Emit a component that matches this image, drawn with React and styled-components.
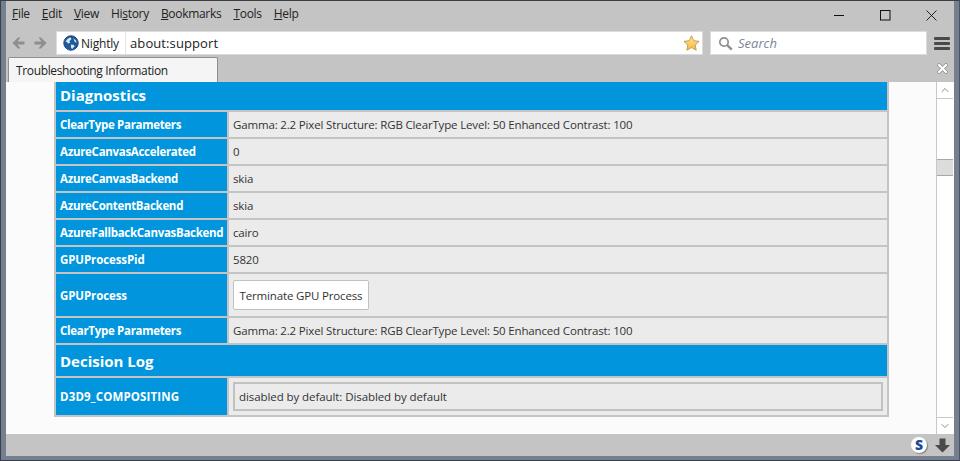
import React from 'react'
import styled, { createGlobalStyle } from 'styled-components'
import { ChevronUp, ChevronDown } from 'lucide-react'

const Global = createGlobalStyle`
    html, body {
        margin: 0;
        padding: 0;
        background: #fff;
    }
    * {
        box-sizing: border-box;
    }
`

const Frame = styled.div`
    width: 960px;
    height: 461px;
    background: #74808f;
    border-top: 1px solid #3a3f45;
    border-left: 1px solid #3a3f45;
    border-right: 1px solid #4b5460;
    border-bottom: 1px solid #3a3f45;
    padding: 0 5px 4px 5px;
    font-family: "Open Sans", "Noto Sans", sans-serif;
    overflow: hidden;
`

const Window = styled.div`
    height: 100%;
    background: #c4c4c4;
    display: flex;
    flex-direction: column;
    position: relative;
`

const MenuBar = styled.div`
    height: 28px;
    display: flex;
    align-items: center;
    justify-content: space-between;
    flex: none;
    padding-left: 6px;
`

const Menus = styled.div`
    display: flex;
    gap: 12px;
    padding-bottom: 4px;
    font-size: 12px;
    letter-spacing: -0.3px;
    color: #222;
`

const WindowButtons = styled.div`
    display: flex;
    align-items: center;
    gap: 35px;
    padding-right: 17px;
    svg {
        display: block;
    }
`

const NavBar = styled.div`
    height: 28px;
    display: flex;
    align-items: center;
    flex: none;
    padding: 0 3px 0 6px;
`

const NavArrows = styled.div`
    display: flex;
    gap: 9px;
    width: 44px;
    svg {
        display: block;
    }
`

const UrlBar = styled.div`
    width: 647px;
    height: 24px;
    flex: none;
    background: #fff;
    border: 1px solid #dcdcdc;
    display: flex;
    align-items: center;
`

const Identity = styled.div`
    width: 69px;
    height: 100%;
    flex: none;
    display: flex;
    align-items: center;
    gap: 2px;
    padding-left: 6px;
    border-right: 1px solid #e3e3e3;
    font-size: 12px;
    letter-spacing: -0.2px;
    color: #222;
`

const Address = styled.div`
    flex: 1;
    padding-left: 4px;
    font-size: 13px;
    letter-spacing: 0.1px;
    color: #222;
`

const StarIcon = styled.svg`
    margin-right: 2px;
    flex: none;
`

const SearchBar = styled.div`
    width: 217px;
    height: 24px;
    flex: none;
    margin-left: 7px;
    background: #fff;
    border: 1px solid #dcdcdc;
    display: flex;
    align-items: center;
    gap: 5px;
    padding-left: 7px;
    font-size: 13px;
    font-style: italic;
    color: #7a8594;
`

const MenuButton = styled.div`
    margin-left: 7px;
    width: 16px;
    flex: none;
    display: flex;
    flex-direction: column;
    gap: 2px;
`

const MenuLine = styled.div`
    height: 3px;
    border-radius: 1px;
    background: #4a4a4a;
`

const TabBar = styled.div`
    height: 25px;
    flex: none;
    display: flex;
    align-items: flex-end;
    justify-content: space-between;
    padding-left: 2px;
`

const Tab = styled.div`
    width: 210px;
    height: 25px;
    background: #f5f5f5;
    border: 1px solid #8f8f8f;
    border-bottom: none;
    border-radius: 2px 2px 0 0;
    padding-left: 7px;
    font-size: 12px;
    letter-spacing: -0.36px;
    line-height: 25px;
    color: #222;
`

const TabClose = styled.svg`
    margin: 0 6px 8px 0;
`

const Body = styled.div`
    flex: 1;
    min-height: 0;
    display: flex;
    background: #fbfbfb;
`

const Viewport = styled.div`
    flex: 1;
    overflow: hidden;
    padding-left: 48px;
`

const Table = styled.div`
    width: 835px;
    margin-top: -3px;
    background: #c4c4c4;
    padding: 0 2px 2px;
    display: grid;
    grid-template-columns: 171px 1fr;
    gap: 2px;
    font-size: 11.5px;
`

const Heading = styled.div`
    grid-column: 1 / 3;
    height: 31px;
    background: #0095dd;
    color: #fff;
    font-size: 15px;
    font-weight: 700;
    padding-left: 4px;
    display: flex;
    align-items: center;
`

const Th = styled.div`
    height: ${p => p.$h || 25}px;
    background: #0095dd;
    color: #fff;
    font-weight: 700;
    letter-spacing: ${p => p.$ls ?? -0.3}px;
    padding-left: 4px;
    display: flex;
    align-items: center;
    white-space: nowrap;
`

const Td = styled.div`
    height: ${p => p.$h || 25}px;
    background: #ebebeb;
    color: #333;
    letter-spacing: -0.16px;
    padding-left: 4px;
    display: flex;
    align-items: center;
    white-space: nowrap;
`

const Button = styled.div`
    width: 136px;
    height: 30px;
    background: #fff;
    border: 1px solid #c1c1c1;
    border-radius: 2px;
    display: flex;
    align-items: center;
    justify-content: center;
`

const LogBox = styled.div`
    width: 650px;
    height: 29px;
    border: 2px solid #c1c1c1;
    padding-left: 4px;
    letter-spacing: -0.08px;
    display: flex;
    align-items: center;
`

const Scrollbar = styled.div`
    width: 17px;
    flex: none;
    margin-right: 1px;
    background: #fff;
    border-left: 1px solid #c8c8c8;
    display: flex;
    flex-direction: column;
`

const ScrollButton = styled.div`
    height: 17px;
    background: #fff;
    border-bottom: ${p => (p.$end ? 'none' : '1px solid #c8c8c8')};
    border-top: ${p => (p.$end ? '1px solid #c8c8c8' : 'none')};
    display: flex;
    align-items: center;
    justify-content: center;
    color: #666;
`

const ScrollTrack = styled.div`
    flex: 1;
    padding-top: 60px;
`

const ScrollThumb = styled.div`
    height: 17px;
    background: #dcdcdc;
    border-top: 1px solid #a8a8a8;
    border-bottom: 1px solid #a8a8a8;
`

const StatusBar = styled.div`
    height: 22px;
    flex: none;
    display: flex;
    align-items: center;
    justify-content: flex-end;
    gap: 8px;
    padding-right: 4px;
    svg {
        display: block;
    }
`

const SBadge = styled.div`
    width: 16px;
    height: 16px;
    border-radius: 50%;
    background: #fff;
    box-shadow: 1px 1px 1px rgba(0, 0, 0, 0.35);
    color: #1a4a9c;
    font-size: 14px;
    font-weight: 800;
    line-height: 16px;
    text-align: center;
`

const Mnemonic = styled.span`
    text-decoration: underline;
`

const rowsTop = [
    ['ClearType Parameters', 'Gamma: 2.2 Pixel Structure: RGB ClearType Level: 50 Enhanced Contrast: 100'],
    ['AzureCanvasAccelerated', '0'],
    ['AzureCanvasBackend', 'skia'],
    ['AzureContentBackend', 'skia'],
    ['AzureFallbackCanvasBackend', 'cairo'],
    ['GPUProcessPid', '5820', -0.1],
]

const Globe = () => (
    <svg width="16" height="16" viewBox="0 0 16 16">
        <circle cx="8" cy="8" r="7.2" fill="#1f5a9e" stroke="#17457f" strokeWidth="1" />
        <path d="M2.5 6.5L5 3.5 7.5 2.5 8.5 4 6.5 6 7 8 5 8.5 4 7zM8 9.5l3 .5 .5 1.5L9 14 8 12.5zM10.5 3.5l2.5 2 .5 2.5-2-1.5z" fill="#dbe7f3" />
    </svg>
)

const App = () => (
    <>
        <Global />
        <Frame>
            <Window>
                <MenuBar>
                    <Menus>
                        <span><Mnemonic>F</Mnemonic>ile</span>
                        <span><Mnemonic>E</Mnemonic>dit</span>
                        <span><Mnemonic>V</Mnemonic>iew</span>
                        <span>Hi<Mnemonic>s</Mnemonic>tory</span>
                        <span><Mnemonic>B</Mnemonic>ookmarks</span>
                        <span><Mnemonic>T</Mnemonic>ools</span>
                        <span><Mnemonic>H</Mnemonic>elp</span>
                    </Menus>
                    <WindowButtons>
                        <svg width="11" height="11" viewBox="0 0 11 11">
                            <path d="M0 5.5h10" stroke="#111" strokeWidth="1" />
                        </svg>
                        <svg width="11" height="11" viewBox="0 0 11 11">
                            <rect x="0.5" y="0.5" width="9.5" height="9.5" fill="none" stroke="#111" />
                        </svg>
                        <svg width="11" height="11" viewBox="0 0 11 11">
                            <path d="M0.5 0.5l10 10M10.5 0.5l-10 10" stroke="#111" strokeWidth="0.9" />
                        </svg>
                    </WindowButtons>
                </MenuBar>
                <NavBar>
                    <NavArrows>
                        <svg width="13" height="12" viewBox="0 0 13 12">
                            <path d="M6 0.5L0.5 6 6 11.5h2.5L5.5 7.5H12.5v-3H5.5L8.5 0.5z" fill="#8e8e8e" />
                        </svg>
                        <svg width="13" height="12" viewBox="0 0 13 12">
                            <path d="M7 0.5L12.5 6 7 11.5H4.5L7.5 7.5H0.5v-3H7.5L4.5 0.5z" fill="#8e8e8e" />
                        </svg>
                    </NavArrows>
                    <UrlBar>
                        <Identity><Globe />Nightly</Identity>
                        <Address>about:support</Address>
                        <StarIcon width="17" height="16" viewBox="0 0 17 16">
                            <defs>
                                <linearGradient id="star" x1="0" y1="0" x2="0" y2="1">
                                    <stop offset="0" stopColor="#ffe79a" />
                                    <stop offset="1" stopColor="#f7b73f" />
                                </linearGradient>
                            </defs>
                            <path d="M8.5 0.8l2.3 4.9 5.3.7-3.9 3.6 1 5.2-4.7-2.6-4.7 2.6 1-5.2L0.9 6.4l5.3-.7z" fill="url(#star)" stroke="#b98d3e" strokeWidth="0.8" />
                        </StarIcon>
                    </UrlBar>
                    <SearchBar>
                        <svg width="15" height="15" viewBox="0 0 15 15">
                            <circle cx="6" cy="6" r="4.2" fill="none" stroke="#8f8f8f" strokeWidth="1.7" />
                            <path d="M9.2 9.2l4.6 4.4" stroke="#8f8f8f" strokeWidth="2.4" />
                        </svg>
                        Search
                    </SearchBar>
                    <MenuButton>
                        <MenuLine />
                        <MenuLine />
                        <MenuLine />
                    </MenuButton>
                </NavBar>
                <TabBar>
                    <Tab>Troubleshooting Information</Tab>
                    <TabClose width="11" height="11" viewBox="0 0 11 11">
                        <path d="M2 2l7 7M9 2l-7 7" stroke="#8a8a8a" strokeWidth="3.6" strokeLinecap="round" />
                        <path d="M2 2l7 7M9 2l-7 7" stroke="#fff" strokeWidth="2.4" strokeLinecap="round" />
                    </TabClose>
                </TabBar>
                <Body>
                    <Viewport>
                        <Table>
                            <Heading>Diagnostics</Heading>
                            {rowsTop.map(([name, value, ls]) => (
                                <React.Fragment key={name}>
                                    <Th $ls={ls}>{name}</Th>
                                    <Td>{value}</Td>
                                </React.Fragment>
                            ))}
                            <Th $h={42} $ls={-0.1}>GPUProcess</Th>
                            <Td $h={42}><Button>Terminate GPU Process</Button></Td>
                            <Th>ClearType Parameters</Th>
                            <Td>Gamma: 2.2 Pixel Structure: RGB ClearType Level: 50 Enhanced Contrast: 100</Td>
                            <Heading>Decision Log</Heading>
                            <Th $h={37} $ls={0.15}>D3D9_COMPOSITING</Th>
                            <Td $h={37}><LogBox>disabled by default: Disabled by default</LogBox></Td>
                        </Table>
                    </Viewport>
                    <Scrollbar>
                        <ScrollButton><ChevronUp size={12} strokeWidth={1.5} /></ScrollButton>
                        <ScrollTrack><ScrollThumb /></ScrollTrack>
                        <ScrollButton $end><ChevronDown size={12} strokeWidth={1.5} /></ScrollButton>
                    </Scrollbar>
                </Body>
                <StatusBar>
                    <SBadge>S</SBadge>
                    <svg width="15" height="15" viewBox="0 0 15 15">
                        <path d="M4.5 0.5h6V7H15L7.5 14.5 0 7h4.5z" fill="#4a4a4a" />
                    </svg>
                </StatusBar>
            </Window>
        </Frame>
    </>
)

export default App
